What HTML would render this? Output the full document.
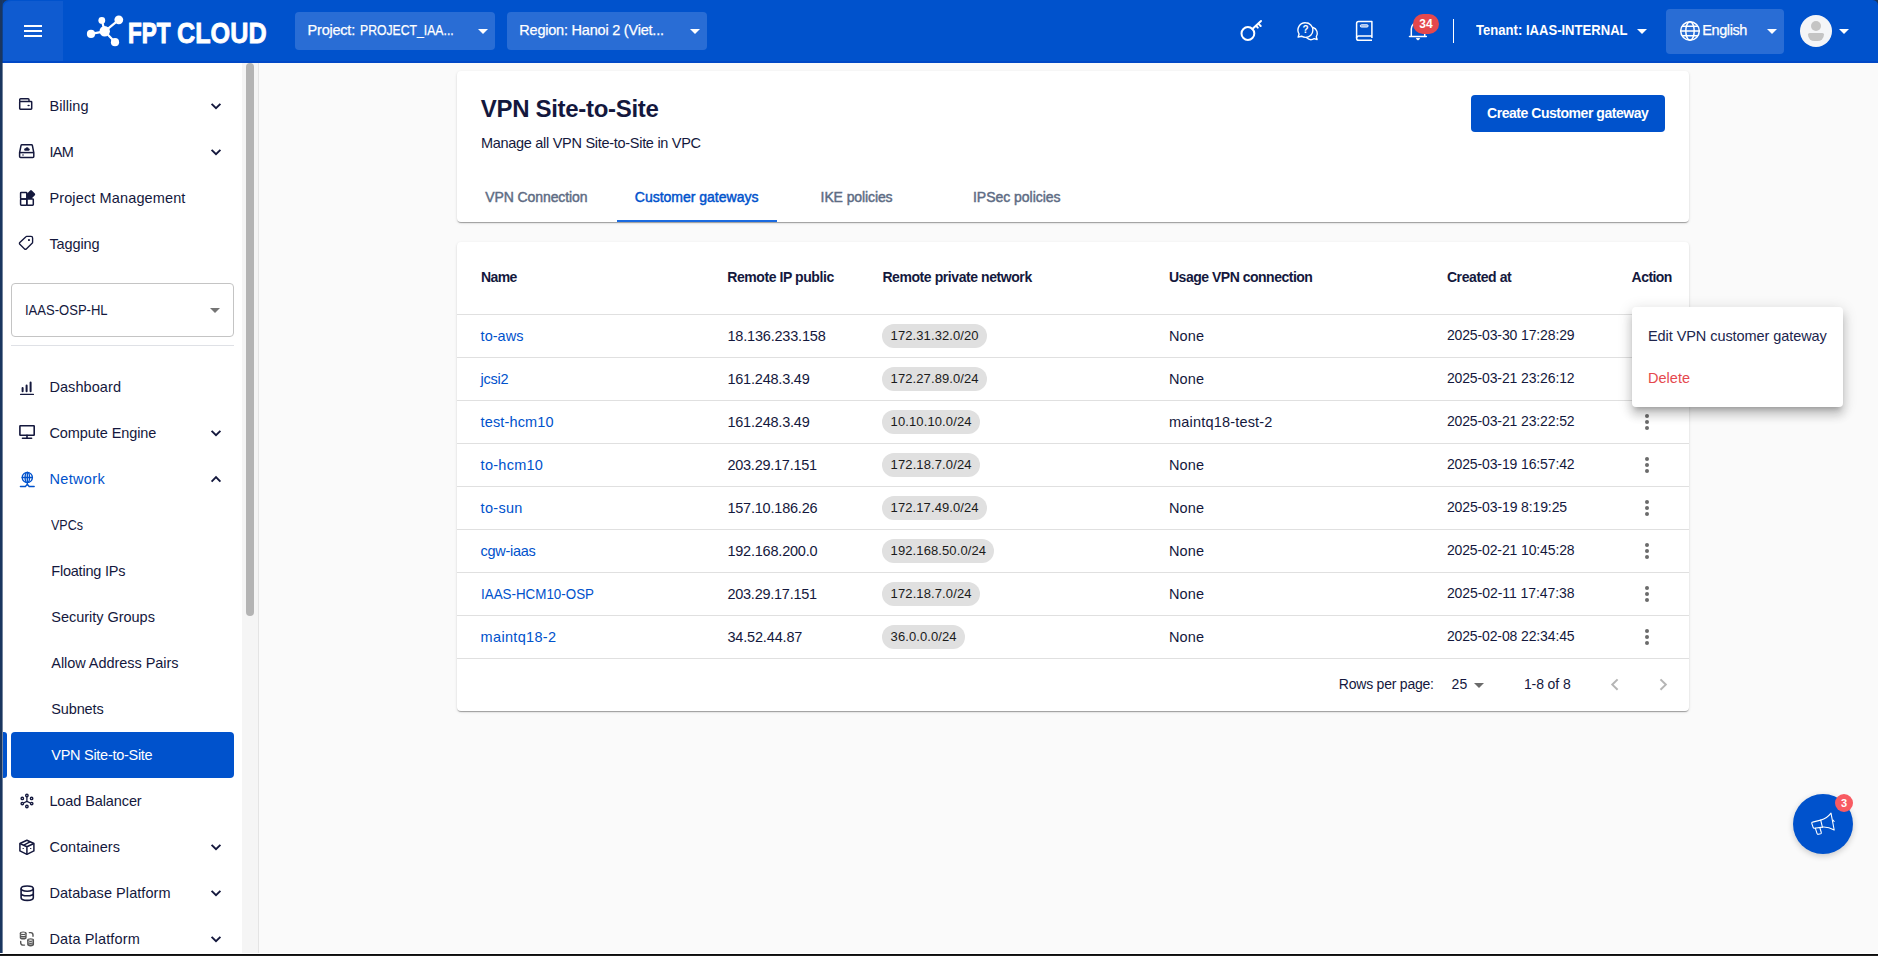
<!DOCTYPE html>
<html lang="en">
<head>
<meta charset="utf-8">
<title>VPN Site-to-Site - FPT Cloud</title>
<style>
*{box-sizing:border-box;margin:0;padding:0}
html,body{width:1878px;height:956px;overflow:hidden}
body{position:relative;background:#fafafa;font-family:"Liberation Sans",sans-serif;color:#14183d;font-size:14px}
.abs{position:absolute}
.t{position:absolute;white-space:nowrap;line-height:20px;height:20px;margin-top:-10px}
/* window frame */
#edgeL{left:0;top:0;width:3px;height:956px;background:linear-gradient(90deg,#1a365f 0,#1a365f 2.4px,rgba(26,54,95,.6) 2.4px,rgba(26,54,95,.6) 3px)}
#edgeB{left:0;top:953px;width:1878px;height:3px;background:linear-gradient(#fff 0,#fff 1px,#0c0c0c 1px,#0c0c0c 2px,#1d1d1d 2px)}
/* header */
#hdr{left:0;top:0;width:1878px;height:63px;background:#0052cc;border-bottom:2px solid #0048c6}
#burger{left:3px;top:1px;width:60px;height:59.5px;background:#0f5bd0;border-top-left-radius:8px}
#burger i{position:absolute;left:21px;width:18px;height:2px;background:#fff}
.hsel{top:12px;width:200px;height:38px;background:#296dd5;border-radius:4px;color:#fff}
.hsel .t{left:12px;top:18px;font-size:15px}
.caret{position:absolute;width:0;height:0;border-left:5px solid transparent;border-right:5px solid transparent;border-top:5px solid #fff}
/* sidebar */
#side{left:3px;top:63px;width:239px;height:891px;background:#fff}
#sbtrack{left:242px;top:63px;width:17px;height:891px;background:#f5f5f5;border-right:1px solid #e4e4e4}
#sbthumb{left:245.5px;top:63px;width:8.5px;height:553px;background:#b4b4b4;border-radius:5px}
.mi{left:49px;font-size:15px;color:#14183d}
.smi{left:51px;font-size:15px;color:#14183d}
.chev{position:absolute;left:210px;width:12px;height:8px}
.ico{position:absolute;left:19px;width:18px;height:18px}
#active{left:11px;top:732px;width:223px;height:46px;background:#0052cc;border-radius:4px}
#activebar{left:3px;top:732px;width:4px;height:46px;background:#0052cc;border-radius:0 3px 3px 0}
#psel{left:11px;top:283px;width:223px;height:54px;border:1px solid #c4c4c4;border-radius:4px;background:#fff}
#sdiv{left:11px;top:345px;width:223px;height:1px;background:#dfe1e6}
/* cards */
.card{background:#fff;border-radius:4px;box-shadow:0 2px 1px -1px rgba(0,0,0,.2),0 1px 1px 0 rgba(0,0,0,.14),0 1px 3px 0 rgba(0,0,0,.12)}
#c1{left:457px;top:71px;width:1232px;height:151px}
#c2{left:457px;top:242px;width:1232px;height:469px}
#title{left:480px;top:108px;font-size:24px;font-weight:bold;line-height:30px;height:30px;margin-top:-15px;color:#14183d}
#sub{left:480px;top:142px;font-size:14.5px;color:#14183d}
#btn{left:1471px;top:95px;width:194px;height:37px;background:#0052cc;border-radius:4px;color:#fff;font-weight:bold;font-size:14px;text-align:center;line-height:35px}
.tab{top:197px;font-size:14.5px;color:#5e6c84;font-weight:normal;-webkit-text-stroke:.3px #5e6c84}
.tab.on{color:#0052cc;-webkit-text-stroke:.3px #0052cc}
#tabline{left:617px;top:220px;width:160px;height:2px;background:#1a6ae0}
.th{top:277px;font-weight:bold;font-size:14px;color:#14183d}
.hr{left:457px;width:1232px;height:1px;background:#e0e0e0}
.nm{left:480px;font-size:15px;color:#0052cc}
.ip{left:727px;font-size:15px;color:#14183d}
.chipbg{height:24px;border-radius:12px;background:#e0e0e0}
.us{left:1169px;font-size:15px;color:#14183d}
.dt{left:1447px;font-size:14px;color:#14183d}
.dots{position:absolute;left:1645px;width:4px;height:16px;margin-top:-7.5px}
.dots i{position:absolute;left:0;width:4px;height:4px;border-radius:2px;background:#6b6b6b}
/* popup */
#pop{left:1632px;top:307px;width:211px;height:100px;background:#fff;border-radius:4px;box-shadow:0 5px 5px -3px rgba(0,0,0,.2),0 8px 10px 1px rgba(0,0,0,.14),0 3px 14px 2px rgba(0,0,0,.12)}
/* fab */
#fab{left:1793px;top:794px;width:60px;height:60px;border-radius:30px;background:#0052cc;box-shadow:0 2px 6px rgba(0,0,0,.2)}
#fabb{left:1835px;top:794px;width:18px;height:18px;border-radius:9px;background:#f85b62;color:#fff;font-size:11px;font-weight:bold;text-align:center;line-height:18px}
</style>
</head>
<body>
<div class="abs" id="hdr"></div>
<div class="abs" id="burger"><i style="top:24px"></i><i style="top:29px"></i><i style="top:34px"></i></div>
<svg class="abs" style="left:84px;top:12px" width="40" height="38" viewBox="84 12 40 38">
<g stroke="#fff" stroke-width="2.2" stroke-linecap="round"><line x1="104.7" y1="31.3" x2="118.8" y2="19.8"/><line x1="104.7" y1="31.3" x2="101.8" y2="20.4"/><line x1="104.7" y1="31.3" x2="91" y2="33.9"/><line x1="104.7" y1="31.3" x2="115" y2="42.2"/></g>
<g fill="#fff"><circle cx="104.7" cy="31.3" r="5.2"/><circle cx="118.8" cy="19.8" r="4.4"/><circle cx="101.8" cy="20.4" r="3.4"/><circle cx="91" cy="33.9" r="4.1"/><circle cx="115" cy="42.2" r="4.1"/></g>
</svg>
<div class="t" style="left:128.1px;top:32.5px;font-size:29.5px;font-weight:bold;color:#fff;transform:scaleX(0.7610);transform-origin:0 50%;line-height:34px;height:34px;margin-top:-17px;-webkit-text-stroke:1.1px #fff">FPT</div><div class="t" style="left:176.6px;top:32.5px;font-size:29.5px;font-weight:bold;color:#fff;transform:scaleX(0.8542);transform-origin:0 50%;line-height:34px;height:34px;margin-top:-17px;-webkit-text-stroke:.8px #fff">CLOUD</div>
<div class="abs hsel" style="left:295px"><div class="t" style="left:12.6px;top:18px;font-size:14.5px;color:#fff;letter-spacing:-0.225px;-webkit-text-stroke:.25px #fff">Project:</div><div class="t" style="left:65.3px;top:18px;font-size:14.5px;color:#fff;transform:scaleX(0.8426);transform-origin:0 50%;-webkit-text-stroke:.25px #fff">PROJECT_IAA...</div><span class="caret" style="left:183px;top:17px"></span></div>
<div class="abs hsel" style="left:507px"><div class="t" style="left:12.3px;top:18px;font-size:14.5px;color:#fff;letter-spacing:-0.215px;-webkit-text-stroke:.25px #fff">Region: Hanoi 2 (Viet...</div><span class="caret" style="left:183px;top:17px"></span></div>
<!--hdr icons-->
<svg class="abs" style="left:1236px;top:14px" width="30" height="32" viewBox="1236 14 30 32" fill="none" stroke="#fff" stroke-width="2" stroke-linecap="round"><circle cx="1247.9" cy="33.5" r="6.4"/><path d="M1252.4 29 L1261 21 M1258.3 23.6 l2.4 2.4 M1256 25.8 l1.8 1.8" /></svg>
<svg class="abs" style="left:1295px;top:20px" width="26" height="22" viewBox="1295 20 26 22" fill="none" stroke="#fff" stroke-width="1.4" stroke-linejoin="round" stroke-linecap="round"><path d="M1305.6 22.8a7.3 7.3 0 0 1 0 14.6c-1.5 0-2.9-.4-4.1-1.2l-3.4 .9 1-3.1a7.3 7.3 0 0 1 6.5-11.2z"/><path d="M1313 27.5a6.3 6.3 0 0 1 3.3 9.4l.8 2.6-2.9-.8a6.3 6.3 0 0 1-7.5-.9"/></svg>
<div class="t" style="left:1302.4px;top:30px;font-size:10px;font-weight:bold;color:#fff">?</div>
<svg class="abs" style="left:1354px;top:19px" width="22" height="24" viewBox="1354 19 22 24" fill="none" stroke="#fff" stroke-width="1.5" stroke-linejoin="round"><path d="M1356.6 38V23.5a2 2 0 0 1 2-2h13.3v16.5"/><path d="M1372 40.3h-13.3a2.1 2.1 0 0 1 0-4.2h13.3"/><rect x="1360.3" y="24.8" width="7.800" height="2.200" rx="1" fill="#7da3e6" stroke-width="1"/></svg>
<svg class="abs" style="left:1406px;top:18px" width="24" height="24" viewBox="1406 18 24 24" fill="none" stroke="#fff" stroke-width="1.5" stroke-linecap="round" stroke-linejoin="round"><path d="M1409.5 36.6h16.8M1411.3 36.4v-7.5a6.7 6.7 0 0 1 13.4 0v7.5"/><path d="M1416.5 38.8a1.6 1.6 0 0 0 3 0z" fill="#fff" stroke-width="1"/></svg>
<div class="abs" style="left:1413px;top:14px;width:26px;height:20px;border-radius:10px;background:#e5484d;color:#fff;font-weight:bold;font-size:12px;line-height:20px;text-align:center">34</div>
<div class="abs" style="left:1453px;top:19px;width:1px;height:24px;background:#fff"></div>
<div class="t" style="left:1476.2px;top:29.8px;font-size:14.5px;font-weight:bold;color:#fff;transform:scaleX(0.9019);transform-origin:0 50%;">Tenant: IAAS-INTERNAL</div>
<span class="caret" style="left:1637px;top:29px"></span>
<div class="abs" style="left:1666px;top:9px;width:118px;height:45px;border-radius:4px;background:#296dd5"></div>
<svg class="abs" style="left:1679px;top:20px" width="22" height="22" viewBox="0 0 22 22" fill="none" stroke="#fff" stroke-width="1.5"><circle cx="11" cy="11" r="9.3"/><ellipse cx="11" cy="11" rx="4.2" ry="9.3"/><path d="M1.7 11h18.6M3 6.3h16M3 15.7h16"/></svg>
<div class="t" style="left:1702.3px;top:30px;font-size:14.5px;color:#fff;letter-spacing:-0.410px;-webkit-text-stroke:.25px #fff">English</div>
<span class="caret" style="left:1767px;top:29px"></span>
<div class="abs" style="left:1800px;top:15px;width:32px;height:32px;border-radius:16px;background:#f4f5f7;overflow:hidden"><div class="abs" style="left:11px;top:6px;width:10px;height:10px;border-radius:5px;background:#c4c4c4"></div><div class="abs" style="left:8px;top:18px;width:16px;height:8px;border-radius:2px 2px 8px 8px;background:#c4c4c4"></div></div>
<span class="caret" style="left:1839px;top:29px"></span>

<div class="abs" id="side"></div>
<div class="abs" id="sbtrack"></div>
<div class="abs" id="sbthumb"></div>
<div class="t" style="left:49.4px;top:106px;font-size:14.5px;color:#14183d;letter-spacing:0.085px;">Billing</div>
<svg class="abs" style="left:206px;top:97.5px" width="20" height="16" viewBox="206 97.5 20 16" fill="none" stroke="#14183d" stroke-width="1.9"><path d="M211.6 103.3 L216 107.7 L220.4 103.3"/></svg>
<div class="t" style="left:49.4px;top:152px;font-size:14.5px;color:#14183d;letter-spacing:-0.641px;">IAM</div>
<svg class="abs" style="left:206px;top:143.5px" width="20" height="16" viewBox="206 143.5 20 16" fill="none" stroke="#14183d" stroke-width="1.9"><path d="M211.6 149.3 L216 153.7 L220.4 149.3"/></svg>
<div class="t" style="left:49.4px;top:198px;font-size:14.5px;color:#14183d;letter-spacing:0.130px;">Project Management</div>
<div class="t" style="left:49.4px;top:244px;font-size:14.5px;color:#14183d;letter-spacing:-0.099px;">Tagging</div>
<div class="t" style="left:49.4px;top:387px;font-size:14.5px;color:#14183d;letter-spacing:0.083px;">Dashboard</div>
<div class="t" style="left:49.4px;top:433px;font-size:14.5px;color:#14183d;letter-spacing:-0.078px;">Compute Engine</div>
<svg class="abs" style="left:206px;top:424.5px" width="20" height="16" viewBox="206 424.5 20 16" fill="none" stroke="#14183d" stroke-width="1.9"><path d="M211.6 430.3 L216 434.7 L220.4 430.3"/></svg>
<div class="t" style="left:49.4px;top:479px;font-size:14.5px;color:#0052cc;letter-spacing:0.352px;">Network</div>
<svg class="abs" style="left:206px;top:470.5px" width="20" height="16" viewBox="206 470.5 20 16" fill="none" stroke="#14183d" stroke-width="1.9"><path d="M211.6 481.1 L216 476.7 L220.4 481.1"/></svg>
<div class="t" style="left:49.4px;top:801px;font-size:14.5px;color:#14183d;letter-spacing:-0.101px;">Load Balancer</div>
<div class="t" style="left:49.4px;top:847px;font-size:14.5px;color:#14183d;letter-spacing:0.053px;">Containers</div>
<svg class="abs" style="left:206px;top:838.5px" width="20" height="16" viewBox="206 838.5 20 16" fill="none" stroke="#14183d" stroke-width="1.9"><path d="M211.6 844.3 L216 848.7 L220.4 844.3"/></svg>
<div class="t" style="left:49.4px;top:893px;font-size:14.5px;color:#14183d;letter-spacing:0.069px;">Database Platform</div>
<svg class="abs" style="left:206px;top:884.5px" width="20" height="16" viewBox="206 884.5 20 16" fill="none" stroke="#14183d" stroke-width="1.9"><path d="M211.6 890.3 L216 894.7 L220.4 890.3"/></svg>
<div class="t" style="left:49.4px;top:939px;font-size:14.5px;color:#14183d;letter-spacing:0.145px;">Data Platform</div>
<svg class="abs" style="left:206px;top:930.5px" width="20" height="16" viewBox="206 930.5 20 16" fill="none" stroke="#14183d" stroke-width="1.9"><path d="M211.6 936.3 L216 940.7 L220.4 936.3"/></svg>
<div class="t" style="left:51.3px;top:525px;font-size:14.5px;color:#14183d;transform:scaleX(0.8630);transform-origin:0 50%;">VPCs</div>
<div class="t" style="left:51.3px;top:571px;font-size:14.5px;color:#14183d;letter-spacing:-0.225px;">Floating IPs</div>
<div class="t" style="left:51.3px;top:617px;font-size:14.5px;color:#14183d;letter-spacing:-0.026px;">Security Groups</div>
<div class="t" style="left:51.3px;top:663px;font-size:14.5px;color:#14183d;letter-spacing:-0.052px;">Allow Address Pairs</div>
<div class="t" style="left:51.3px;top:709px;font-size:14.5px;color:#14183d;letter-spacing:-0.136px;">Subnets</div>
<div class="abs" id="active"></div><div class="abs" id="activebar"></div>
<div class="t" style="left:51.3px;top:755px;font-size:14.5px;color:#fff;letter-spacing:-0.279px;">VPN Site-to-Site</div>
<div class="abs" id="psel"></div>
<div class="t" style="left:25.2px;top:310px;font-size:14.5px;color:#14183d;transform:scaleX(0.8992);transform-origin:0 50%;">IAAS-OSP-HL</div>
<span class="caret" style="left:210px;top:308px;border-top-color:#757575"></span>
<div class="abs" id="sdiv"></div>
<svg class="abs" style="left:16px;top:94px" width="22" height="22" viewBox="16 94 22 22" fill="none" stroke="#14183d" stroke-width="1.5" stroke-linejoin="round"><rect x="19.7" y="101.4" width="12" height="7.9" rx=".7"/><path d="M19.7 101.4v-1.7a.9.9 0 0 1 .9-.9h7.5a.9.9 0 0 1 .9.9v1.7" stroke-width="1.4"/><ellipse cx="28.6" cy="105.5" rx="1.2" ry=".7" fill="#14183d" stroke="none"/></svg>
<svg class="abs" style="left:16.4px;top:140px" width="22" height="22" viewBox="16 140 22 22" fill="none" stroke="#14183d" stroke-width="1.5" stroke-linejoin="round"><path d="M19.6 152.6l1.4-7a1 1 0 0 1 1-.8h9.4a1 1 0 0 1 1 .8l1.4 7v3.8a1 1 0 0 1-1 1h-12.2a1 1 0 0 1-1-1z"/><path d="M19.6 152.6h14.2"/><g transform="translate(27 149.4) scale(.72) translate(-27.1 -149.2)"><path d="M24.3 151h5a1.6 1.6 0 0 0 .2-3.2 2.4 2.4 0 0 0-4.5-.3 1.8 1.8 0 0 0-.7 3.5z" fill="#14183d" stroke="none"/></g><path d="M23 154.3v1.5" stroke-width="1.1"/></svg>
<svg class="abs" style="left:16px;top:186px" width="22" height="22" viewBox="16 186 22 22" fill="none" stroke="#14183d" stroke-width="1.5" stroke-linejoin="round"><rect x="20.6" y="192.4" width="6.2" height="6.5" rx=".7"/><rect x="20.6" y="198.9" width="6.2" height="6.4" rx=".7"/><rect x="26.8" y="198.9" width="6.5" height="6.4" rx=".7"/><path d="M31 191.3l3 3.1-3 3.1-3-3.1z" fill="#14183d" stroke-width="2.4"/><path d="M27.5 194h4v4.5h-4z" fill="#14183d" stroke-width="1"/></svg>
<svg class="abs" style="left:16px;top:232px" width="22" height="22" viewBox="16 232 22 22" fill="none" stroke="#14183d" stroke-width="1.35" stroke-linejoin="round"><path d="M26.5 236.4h4.5a1.6 1.6 0 0 1 1.6 1.6v4.2a1.5 1.5 0 0 1-.5 1.1l-5.8 5.6a1.2 1.2 0 0 1-1.7 0l-4.8-4.6a1.2 1.2 0 0 1 0-1.7l5.9-5.7a1.5 1.5 0 0 1 1.3-.5z"/><rect x="28" y="239" width="1.9" height="1.9" rx=".4" fill="#14183d" stroke="none"/></svg>
<svg class="abs" style="left:16px;top:376px" width="22" height="22" viewBox="16 376 22 22" fill="none" stroke="#14183d" stroke-linecap="round"><path d="M20.6 394.4h12.8" stroke-width="1.3"/><path d="M22.6 388v3.2M26.6 385.4v5.8M30.6 382.6v8.6" stroke-width="2"/></svg>
<svg class="abs" style="left:16px;top:422px" width="22" height="22" viewBox="16 422 22 22" fill="none" stroke="#14183d" stroke-width="1.6" stroke-linejoin="round"><rect x="19.9" y="425.8" width="14.3" height="9.4" rx=".4"/><path d="M27 435.2v2.8M22.5 438.3h9.1" stroke-linecap="round"/></svg>
<svg class="abs" style="left:16px;top:468px" width="22" height="22" viewBox="16 468 22 22" fill="none" stroke="#0052cc" stroke-width="1.35" stroke-linecap="round"><circle cx="27.3" cy="477.5" r="5.1"/><ellipse cx="27.3" cy="477.5" rx="2.2" ry="5.1"/><path d="M22.2 477.5h10.2M27.3 472.4v10.2M27.3 482.8v1.5l-1.9 2.2h-5M27.3 484.3l1.9 2.2h5" /></svg>
<svg class="abs" style="left:16px;top:790px" width="22" height="22" viewBox="16 790 22 22" fill="none" stroke="#14183d" stroke-width="1.4"><path d="M26.9 797v4.3l-3.3 1.7M26.9 801.3l3.5 1.7" stroke-width="1.3"/><circle cx="26.9" cy="795.5" r="1.2"/><circle cx="22.3" cy="798.4" r="1.2"/><circle cx="31.6" cy="798.4" r="1.2"/><circle cx="22.3" cy="803.6" r="1.2"/><circle cx="31.7" cy="803.6" r="1.2"/><circle cx="26.9" cy="806.5" r="1.2"/></svg>
<svg class="abs" style="left:16px;top:836px" width="22" height="22" viewBox="16 836 22 22" fill="none" stroke="#14183d" stroke-width="1.5" stroke-linejoin="round"><path d="M26.9 840.3l7 3.2v7.4l-7 3.4-7-3.4v-7.4z"/><path d="M19.9 843.5l7 3.3 7-3.3M26.9 846.8v7.5M23.8 845.1l6.6-3.4"/><path d="M22.6 848.5h1.2M30.1 848.5h1.2" stroke-width="1.1"/></svg>
<svg class="abs" style="left:16px;top:882px" width="22" height="22" viewBox="16 882 22 22" fill="none" stroke="#14183d" stroke-width="1.6"><ellipse cx="27.2" cy="888.6" rx="6.1" ry="2.6"/><path d="M21.1 888.6v9.2c0 1.4 2.7 2.6 6.1 2.6s6.1-1.2 6.1-2.6v-9.2M21.1 893.2c0 1.4 2.7 2.6 6.1 2.6s6.1-1.2 6.1-2.6"/></svg>
<svg class="abs" style="left:16px;top:928px" width="22" height="22" viewBox="16 928 22 22" fill="none" stroke="#555" stroke-width="1.1"><ellipse cx="23.2" cy="933.2" rx="2.9" ry="1.25"/><path d="M20.3 933.2v4.5c0 .7 1.3 1.25 2.9 1.25s2.9-.55 2.9-1.25v-4.5M20.3 935.2c0 .7 1.3 1.25 2.9 1.25s2.9-.55 2.9-1.25M20.3 936.9c0 .7 1.3 1.25 2.9 1.25s2.9-.55 2.9-1.25"/><ellipse cx="30.6" cy="940.1" rx="2.9" ry="1.25"/><path d="M27.7 940.1v4.5c0 .7 1.3 1.25 2.9 1.25s2.9-.55 2.9-1.25v-4.5M27.7 942.1c0 .7 1.3 1.25 2.9 1.25s2.9-.55 2.9-1.25M27.7 943.8c0 .7 1.3 1.25 2.9 1.25s2.9-.55 2.9-1.25"/><path d="M29.3 932.6h1.4a2.3 2.3 0 0 1 2.3 2.3v1.3M24.5 945.1h-1.5a2.3 2.3 0 0 1-2.3-2.3v-1.4" stroke-width="1.4" stroke-linecap="round"/></svg>

<div class="abs card" id="c1"></div>
<div class="abs card" id="c2"></div>
<div class="t" style="left:480.8px;top:108.5px;font-size:24px;font-weight:bold;color:#14183d;letter-spacing:-0.312px;line-height:30px;height:30px;margin-top:-15px">VPN Site-to-Site</div>
<div class="t" style="left:480.9px;top:143px;font-size:14.5px;color:#14183d;letter-spacing:-0.288px;">Manage all VPN Site-to-Site in VPC</div>
<div class="abs" id="btn"></div>
<div class="t" style="left:1487px;top:112.5px;font-size:14px;font-weight:bold;color:#fff;letter-spacing:-0.462px;">Create Customer gateway</div>
<div class="t" style="left:485.2px;top:196.6px;font-size:14px;color:#5e6c84;letter-spacing:-0.086px;-webkit-text-stroke:.45px #5e6c84">VPN Connection</div>
<div class="t" style="left:634.8px;top:196.6px;font-size:14px;color:#0052cc;letter-spacing:-0.007px;-webkit-text-stroke:.45px #0052cc">Customer gateways</div>
<div class="t" style="left:820.6px;top:196.6px;font-size:14px;color:#5e6c84;letter-spacing:-0.105px;-webkit-text-stroke:.45px #5e6c84">IKE policies</div>
<div class="t" style="left:973px;top:196.6px;font-size:14px;color:#5e6c84;letter-spacing:-0.026px;-webkit-text-stroke:.45px #5e6c84">IPSec policies</div>
<div class="abs" id="tabline"></div>
<div class="t" style="left:480.9px;top:276.6px;font-size:14px;font-weight:bold;color:#14183d;letter-spacing:-0.580px;">Name</div>
<div class="t" style="left:727.2px;top:276.6px;font-size:14px;font-weight:bold;color:#14183d;letter-spacing:-0.422px;">Remote IP public</div>
<div class="t" style="left:882.4px;top:276.6px;font-size:14px;font-weight:bold;color:#14183d;letter-spacing:-0.425px;">Remote private network</div>
<div class="t" style="left:1169px;top:276.6px;font-size:14px;font-weight:bold;color:#14183d;letter-spacing:-0.493px;">Usage VPN connection</div>
<div class="t" style="left:1446.9px;top:276.6px;font-size:14px;font-weight:bold;color:#14183d;letter-spacing:-0.408px;">Created at</div>
<div class="t" style="left:1631.6px;top:276.6px;font-size:14px;font-weight:bold;color:#14183d;letter-spacing:-0.553px;">Action</div>
<div class="abs hr" style="top:314px"></div>
<div class="t" style="left:480.6px;top:336.0px;font-size:14.5px;color:#0052cc;letter-spacing:0.036px;">to-aws</div>
<div class="t" style="left:727.4px;top:336.0px;font-size:14.5px;color:#14183d;letter-spacing:-0.184px;">18.136.233.158</div>
<div class="abs chipbg" style="left:882px;top:323.5px;width:104.8px"></div>
<div class="t" style="left:890.6px;top:335.5px;font-size:13px;color:#1b1b1b;letter-spacing:0.096px;">172.31.32.0/20</div>
<div class="t" style="left:1169px;top:336.0px;font-size:14.5px;color:#14183d;letter-spacing:0.109px;">None</div>
<div class="t" style="left:1446.9px;top:334.8px;font-size:14px;color:#14183d;letter-spacing:-0.128px;">2025-03-30 17:28:29</div>
<div class="dots" style="top:335.5px"><i style="top:0"></i><i style="top:6px"></i><i style="top:12px"></i></div>
<div class="abs hr" style="top:357px"></div>
<div class="t" style="left:480.6px;top:379.0px;font-size:14.5px;color:#0052cc;letter-spacing:-0.254px;">jcsi2</div>
<div class="t" style="left:727.4px;top:379.0px;font-size:14.5px;color:#14183d;letter-spacing:-0.207px;">161.248.3.49</div>
<div class="abs chipbg" style="left:882px;top:366.5px;width:104.8px"></div>
<div class="t" style="left:890.6px;top:378.5px;font-size:13px;color:#1b1b1b;letter-spacing:0.096px;">172.27.89.0/24</div>
<div class="t" style="left:1169px;top:379.0px;font-size:14.5px;color:#14183d;letter-spacing:0.109px;">None</div>
<div class="t" style="left:1446.9px;top:377.8px;font-size:14px;color:#14183d;letter-spacing:-0.128px;">2025-03-21 23:26:12</div>
<div class="dots" style="top:378.5px"><i style="top:0"></i><i style="top:6px"></i><i style="top:12px"></i></div>
<div class="abs hr" style="top:400px"></div>
<div class="t" style="left:480.6px;top:422.0px;font-size:14.5px;color:#0052cc;letter-spacing:0.141px;">test-hcm10</div>
<div class="t" style="left:727.4px;top:422.0px;font-size:14.5px;color:#14183d;letter-spacing:-0.207px;">161.248.3.49</div>
<div class="abs chipbg" style="left:882px;top:409.5px;width:97.7px"></div>
<div class="t" style="left:890.6px;top:421.5px;font-size:13px;color:#1b1b1b;letter-spacing:0.114px;">10.10.10.0/24</div>
<div class="t" style="left:1169px;top:422.0px;font-size:14.5px;color:#14183d;letter-spacing:0.189px;">maintq18-test-2</div>
<div class="t" style="left:1446.9px;top:420.8px;font-size:14px;color:#14183d;letter-spacing:-0.128px;">2025-03-21 23:22:52</div>
<div class="dots" style="top:421.5px"><i style="top:0"></i><i style="top:6px"></i><i style="top:12px"></i></div>
<div class="abs hr" style="top:443px"></div>
<div class="t" style="left:480.6px;top:465.0px;font-size:14.5px;color:#0052cc;letter-spacing:0.264px;">to-hcm10</div>
<div class="t" style="left:727.4px;top:465.0px;font-size:14.5px;color:#14183d;letter-spacing:-0.245px;">203.29.17.151</div>
<div class="abs chipbg" style="left:882px;top:452.5px;width:97.7px"></div>
<div class="t" style="left:890.6px;top:464.5px;font-size:13px;color:#1b1b1b;letter-spacing:0.114px;">172.18.7.0/24</div>
<div class="t" style="left:1169px;top:465.0px;font-size:14.5px;color:#14183d;letter-spacing:0.109px;">None</div>
<div class="t" style="left:1446.9px;top:463.8px;font-size:14px;color:#14183d;letter-spacing:-0.128px;">2025-03-19 16:57:42</div>
<div class="dots" style="top:464.5px"><i style="top:0"></i><i style="top:6px"></i><i style="top:12px"></i></div>
<div class="abs hr" style="top:486px"></div>
<div class="t" style="left:480.6px;top:508.0px;font-size:14.5px;color:#0052cc;letter-spacing:0.297px;">to-sun</div>
<div class="t" style="left:727.4px;top:508.0px;font-size:14.5px;color:#14183d;letter-spacing:-0.211px;">157.10.186.26</div>
<div class="abs chipbg" style="left:882px;top:495.5px;width:104.8px"></div>
<div class="t" style="left:890.6px;top:507.5px;font-size:13px;color:#1b1b1b;letter-spacing:0.096px;">172.17.49.0/24</div>
<div class="t" style="left:1169px;top:508.0px;font-size:14.5px;color:#14183d;letter-spacing:0.109px;">None</div>
<div class="t" style="left:1446.9px;top:506.8px;font-size:14px;color:#14183d;letter-spacing:-0.119px;">2025-03-19 8:19:25</div>
<div class="dots" style="top:507.5px"><i style="top:0"></i><i style="top:6px"></i><i style="top:12px"></i></div>
<div class="abs hr" style="top:529px"></div>
<div class="t" style="left:480.6px;top:551.0px;font-size:14.5px;color:#0052cc;letter-spacing:-0.288px;">cgw-iaas</div>
<div class="t" style="left:727.4px;top:551.0px;font-size:14.5px;color:#14183d;letter-spacing:-0.211px;">192.168.200.0</div>
<div class="abs chipbg" style="left:882px;top:538.5px;width:112.2px"></div>
<div class="t" style="left:890.6px;top:550.5px;font-size:13px;color:#1b1b1b;letter-spacing:0.101px;">192.168.50.0/24</div>
<div class="t" style="left:1169px;top:551.0px;font-size:14.5px;color:#14183d;letter-spacing:0.109px;">None</div>
<div class="t" style="left:1446.9px;top:549.8px;font-size:14px;color:#14183d;letter-spacing:-0.128px;">2025-02-21 10:45:28</div>
<div class="dots" style="top:550.5px"><i style="top:0"></i><i style="top:6px"></i><i style="top:12px"></i></div>
<div class="abs hr" style="top:572px"></div>
<div class="t" style="left:480.6px;top:594.0px;font-size:14.5px;color:#0052cc;transform:scaleX(0.9226);transform-origin:0 50%;">IAAS-HCM10-OSP</div>
<div class="t" style="left:727.4px;top:594.0px;font-size:14.5px;color:#14183d;letter-spacing:-0.245px;">203.29.17.151</div>
<div class="abs chipbg" style="left:882px;top:581.5px;width:97.7px"></div>
<div class="t" style="left:890.6px;top:593.5px;font-size:13px;color:#1b1b1b;letter-spacing:0.114px;">172.18.7.0/24</div>
<div class="t" style="left:1169px;top:594.0px;font-size:14.5px;color:#14183d;letter-spacing:0.109px;">None</div>
<div class="t" style="left:1446.9px;top:592.8px;font-size:14px;color:#14183d;letter-spacing:-0.070px;">2025-02-11 17:47:38</div>
<div class="dots" style="top:593.5px"><i style="top:0"></i><i style="top:6px"></i><i style="top:12px"></i></div>
<div class="abs hr" style="top:615px"></div>
<div class="t" style="left:480.6px;top:637.0px;font-size:14.5px;color:#0052cc;letter-spacing:0.328px;">maintq18-2</div>
<div class="t" style="left:727.4px;top:637.0px;font-size:14.5px;color:#14183d;letter-spacing:-0.161px;">34.52.44.87</div>
<div class="abs chipbg" style="left:882px;top:624.5px;width:82.8px"></div>
<div class="t" style="left:890.6px;top:636.5px;font-size:13px;color:#1b1b1b;letter-spacing:0.094px;">36.0.0.0/24</div>
<div class="t" style="left:1169px;top:637.0px;font-size:14.5px;color:#14183d;letter-spacing:0.109px;">None</div>
<div class="t" style="left:1446.9px;top:635.8px;font-size:14px;color:#14183d;letter-spacing:-0.128px;">2025-02-08 22:34:45</div>
<div class="dots" style="top:636.5px"><i style="top:0"></i><i style="top:6px"></i><i style="top:12px"></i></div>
<div class="abs hr" style="top:658px"></div>
<div class="t" style="left:1338.8px;top:683.8px;font-size:14px;color:#14183d;letter-spacing:-0.220px;">Rows per page:</div>
<div class="t" style="left:1451.4px;top:683.8px;font-size:14px;color:#14183d;letter-spacing:0.222px;">25</div>
<div class="t" style="left:1523.9px;top:683.8px;font-size:14px;color:#14183d;letter-spacing:-0.098px;">1-8 of 8</div>
<span class="caret" style="left:1474px;top:683px;border-top-color:#6b6b6b"></span>
<svg class="abs" style="left:1605px;top:674px" width="70" height="22" viewBox="1605 674 70 22" fill="none" stroke="#b5b5b5" stroke-width="2"><path d="M1617.6 679.4l-5.3 5.2 5.3 5.2M1660.5 679.4l5.3 5.2-5.3 5.2"/></svg>

<div class="abs" id="pop"></div>
<div class="t" style="left:1648px;top:336px;font-size:14.5px;color:#20254d;letter-spacing:-0.072px;">Edit VPN customer gateway</div>
<div class="t" style="left:1648px;top:378px;font-size:14.5px;color:#e5484d;letter-spacing:0.016px;">Delete</div>
<div class="abs" id="fab"></div>
<svg class="abs" style="left:1803px;top:804px" width="40" height="40" viewBox="1803 804 40 40" fill="none" stroke="#fff" stroke-width="1.1" stroke-linejoin="round" stroke-linecap="round"><path d="M1812.6 822.1l8.1-2 1.7 7-8 1.2a1.2 1.2 0 0 1-1.3-.9l-1.3-4a1 1 0 0 1 .8-1.3z"/><path d="M1820.7 820.1c4.2-1.3 7.8-3.8 10.3-7l3.2 16.9c-3.6-2-7.6-3.2-11.8-2.9"/><path d="M1815.3 828.2l1.8 5.4a1.1 1.1 0 0 0 1.3.7l2.2-.5a1 1 0 0 0 .7-1.3l-1.5-5"/><path d="M1833.2 820.2l.9 1.3"/></svg>
<div class="abs" id="fabb">3</div>
<div class="abs" id="edgeL"></div>
<svg class="abs" style="left:0;top:0" width="12" height="12" viewBox="0 0 12 12"><path d="M2.4 0H9A6.5 6.5 0 0 0 2.4 7z" fill="#1a365f"/></svg>
<svg class="abs" style="left:1866px;top:0" width="12" height="12" viewBox="0 0 12 12"><path d="M12 0H6.5A5.5 5.5 0 0 1 12 5.5z" fill="#1a365f"/></svg>
<div class="abs" id="edgeB"></div>

</body>
</html>
